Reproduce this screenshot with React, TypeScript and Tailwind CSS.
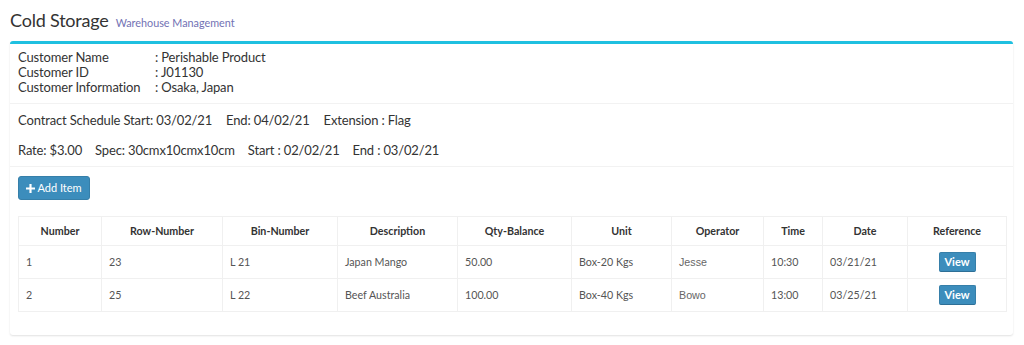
import { Fragment } from "react";

const COLS = [83, 121, 115, 120, 114, 100, 92, 59, 85, 99];
const HEADERS = ["Number", "Row-Number", "Bin-Number", "Description", "Qty-Balance", "Unit", "Operator", "Time", "Date", "Reference"];

const ROWS = [
  { no: "1", row: "23", bin: "L 21", desc: "Japan Mango", qty: "50.00", unit: "Box-20 Kgs", op: "Jesse", time: "10:30", date: "03/21/21" },
  { no: "2", row: "25", bin: "L 22", desc: "Beef Australia", qty: "100.00", unit: "Box-40 Kgs", op: "Bowo", time: "13:00", date: "03/25/21" },
];

const CUSTOMER = [
  ["Customer Name", ": Perishable Product"],
  ["Customer ID", ": J01130"],
  ["Customer Information", ": Osaka, Japan"],
];

function PlusIcon() {
  return (
    <svg width="9" height="9" viewBox="0 0 10 10" className="fill-white">
      <path d="M3.8 0h2.4v3.8H10v2.4H6.2V10H3.8V6.2H0V3.8h3.8z" />
    </svg>
  );
}

export default function App() {
  return (
    <div className="min-h-[345px] w-[1024px] bg-white font-['Lato',sans-serif] text-[#333]">
      {/* Header */}
      <div className="flex h-[41px] items-baseline gap-[7px] px-[10px] pt-[6px]">
        <h1 className="text-[18px] leading-[28px] tracking-[-0.2px] text-[#333]">Cold Storage</h1>
        <span className="text-[10.8px] text-[#7272b4]">Warehouse Management</span>
      </div>

      {/* Box */}
      <div className="mx-[10px] w-[1003px] rounded-[3px] border-t-[3px] border-[#1fc0e0] bg-white shadow-[0_1px_2px_rgba(0,0,0,0.12)]">
        <div className="border-b border-[#f2f2f2] px-[8px] pt-[6px] pb-[8px] text-[13px] leading-[15px] tracking-[-0.15px]">
          {CUSTOMER.map(([label, value]) => (
            <div key={label} className="flex">
              <span className="w-[137px]">{label}</span>
              <span>{value}</span>
            </div>
          ))}
        </div>

        <div className="flex flex-col gap-[10px] border-b border-[#f2f2f2] px-[8px] py-[6px] text-[13px] leading-[20px] tracking-[-0.15px]">
          <div className="flex gap-[14px]">
            <span>Contract Schedule Start: 03/02/21</span>
            <span>End: 04/02/21</span>
            <span>Extension : Flag</span>
          </div>
          <div className="flex gap-[13px]">
            <span>Rate: $3.00</span>
            <span>Spec: 30cmx10cmx10cm</span>
            <span>Start : 02/02/21</span>
            <span>End : 03/02/21</span>
          </div>
        </div>

        <div className="px-[8px] pt-[9px] pb-[23px]">
          <button className="flex h-[24px] w-[72px] items-center justify-center gap-[2px] rounded-[3px] border border-[#367fa9] bg-[#3c8dbc] text-[11px] text-white">
            <PlusIcon />
            <span>Add Item</span>
          </button>

          <table className="mt-[16px] w-[988px] table-fixed border-collapse text-[10.7px]">
            <colgroup>
              {COLS.map((w, i) => (
                <col key={i} style={{ width: w }} />
              ))}
            </colgroup>
            <thead>
              <tr className="h-[29px]">
                {HEADERS.map((h) => (
                  <th key={h} className="border border-[#f0f0f0] text-center font-bold text-[#333]">
                    {h}
                  </th>
                ))}
              </tr>
            </thead>
            <tbody className="text-[#555]">
              {ROWS.map((r) => (
                <Fragment key={r.no}>
                  <tr className="h-[33px]">
                    <td className="border border-[#f0f0f0] pl-[7px]">{r.no}</td>
                    <td className="border border-[#f0f0f0] pl-[7px]">{r.row}</td>
                    <td className="border border-[#f0f0f0] pl-[7px]">{r.bin}</td>
                    <td className="border border-[#f0f0f0] pl-[7px]">{r.desc}</td>
                    <td className="border border-[#f0f0f0] pl-[7px]">{r.qty}</td>
                    <td className="border border-[#f0f0f0] pl-[7px]">{r.unit}</td>
                    <td className="border border-[#f0f0f0] pl-[7px] font-['Liberation_Sans',sans-serif] text-[#666]">{r.op}</td>
                    <td className="border border-[#f0f0f0] pl-[7px]">{r.time}</td>
                    <td className="border border-[#f0f0f0] pl-[7px]">{r.date}</td>
                    <td className="border border-[#f0f0f0] text-center">
                      <button className="mx-auto h-[20px] w-[37px] rounded-[2px] border border-[#367fa9] border-b-[#2e6f96] bg-[#3c8dbc] text-[11px] font-bold text-white">
                        View
                      </button>
                    </td>
                  </tr>
                </Fragment>
              ))}
            </tbody>
          </table>
        </div>
      </div>
    </div>
  );
}
